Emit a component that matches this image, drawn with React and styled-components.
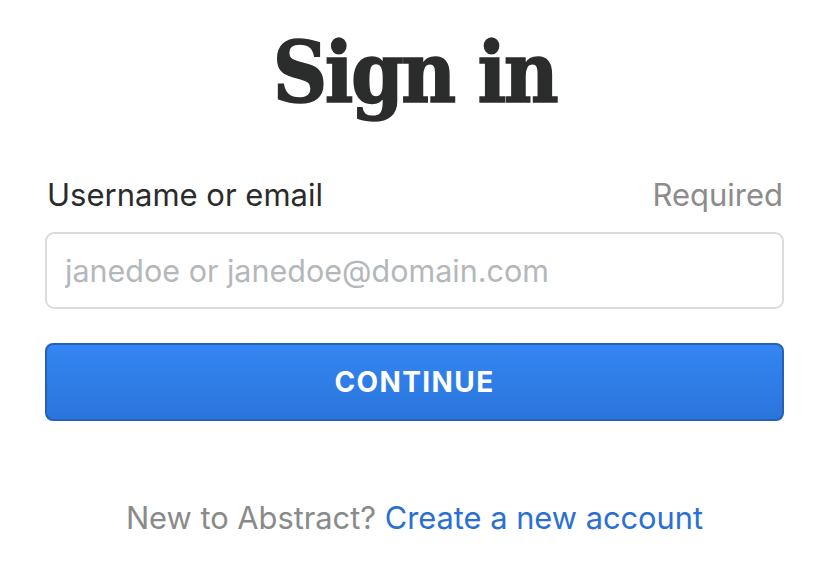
import React from 'react'
import styled, { createGlobalStyle } from 'styled-components';

const GlobalStyle = createGlobalStyle`
    html, body {
        margin: 0;
        padding: 0;
        background: #fff;
    }
    body {
        font-family: Inter, "Liberation Sans", Arial, sans-serif;
    }
`;

function App() {
    return (
        <>
            <GlobalStyle />
            <SignInStyled>
                <h1>Sign in</h1>
                <div className="field">
                    <div className="label-row">
                        <label htmlFor="login">Username or email</label>
                        <span className="hint">Required</span>
                    </div>
                    <input id="login" type="text" placeholder="janedoe or janedoe@domain.com" />
                </div>
                <ContinueButton type="button">Continue</ContinueButton>
                <p className="footer">
                    New to Abstract? <a href="#signup">Create a new account</a>
                </p>
            </SignInStyled>
        </>
    )
}

const SignInStyled = styled.main`
    width: 739px;
    margin: 0 50px 0 45px;
    display: flex;
    flex-direction: column;

    h1{
        margin: 23px 0 0;
        height: 100px;
        line-height: 100px;
        text-align: center;
        font-family: "DejaVu Serif", "Liberation Serif", serif;
        font-stretch: condensed;
        font-weight: 700;
        font-size: 84px;
        color: #2b2d2c;
        -webkit-text-stroke: 1.5px #2b2d2c;
        letter-spacing: -2.5px;
    }

    .field{
        margin-top: 52px;
        display: flex;
        flex-direction: column;
        .label-row{
            display: flex;
            justify-content: space-between;
            align-items: baseline;
            height: 40px;
            line-height: 40px;
            font-size: 31px;
            label{
                color: #2b2b2b;
                padding-left: 2px;
            }
            .hint{
                color: #8c8c8c;
                padding-right: 1px;
            }
        }
        input{
            margin-top: 17px;
            box-sizing: border-box;
            width: 100%;
            height: 77px;
            border: 2px solid #dcdcdc;
            border-radius: 9px;
            padding: 0 18px;
            font-family: Inter, "Liberation Sans", Arial, sans-serif;
            font-size: 30.5px;
            color: #2b2b2b;
            outline: none;
            &::placeholder{
                color: #b4b8bb;
            }
        }
    }

    .footer{
        margin: 77px 0 0;
        text-align: center;
        font-size: 30.8px;
        line-height: 40px;
        color: #8a8a8a;
        a{
            color: #2a6fd4;
            text-decoration: none;
        }
    }
`;

const ContinueButton = styled.button`
    margin-top: 34px;
    height: 78px;
    width: 100%;
    border: 2px solid #2461b8;
    border-radius: 8px;
    background: linear-gradient(to bottom, #3486f2, #2a75dc);
    color: #fff;
    font-family: Inter, "Liberation Sans", Arial, sans-serif;
    font-weight: 700;
    font-size: 28px;
    letter-spacing: 1.4px;
    text-transform: uppercase;
    cursor: pointer;
`;

export default App;
